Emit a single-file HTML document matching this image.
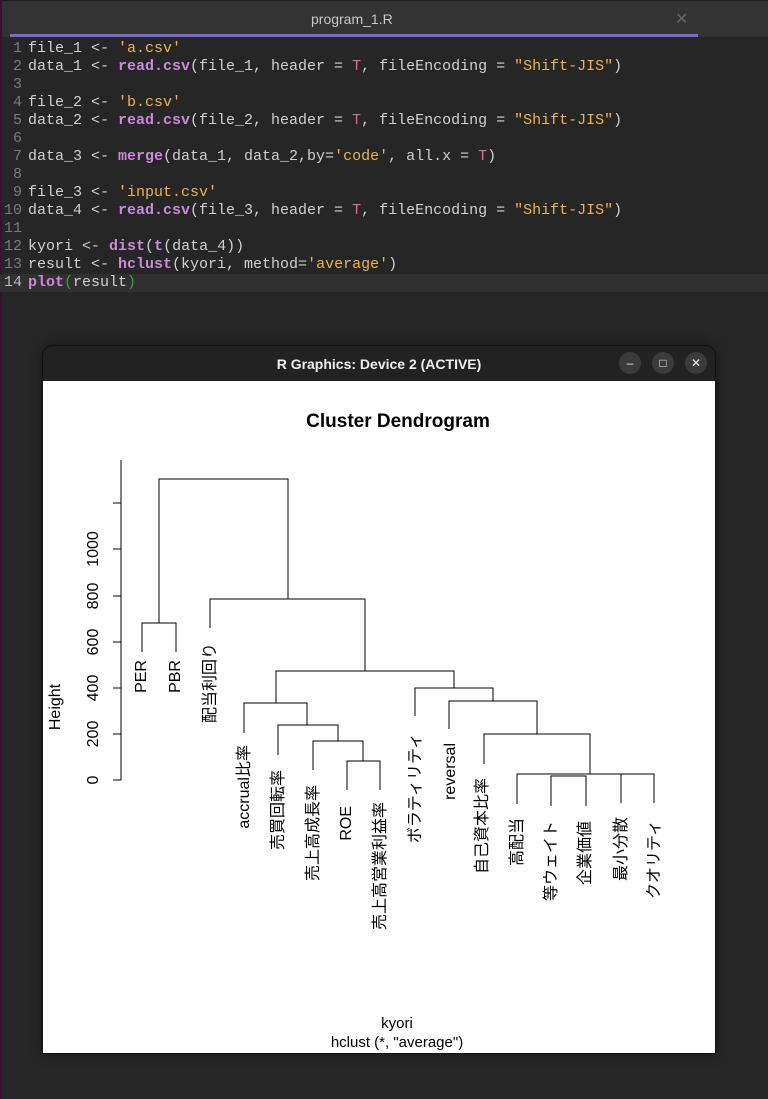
<!DOCTYPE html>
<html><head><meta charset="utf-8"><style>
html,body{margin:0;padding:0}
body{width:768px;height:1099px;background:#262626;position:relative;overflow:hidden;font-family:"Liberation Sans","Noto Sans CJK JP",sans-serif}
.strip{position:absolute;left:0;top:0;width:2px;height:1099px;background:#3a1030}
.tabbar{position:absolute;left:2px;top:0;width:766px;height:37px;background:#333;border-top:1px solid #1e1e1e;box-sizing:border-box}
.tabtitle{position:absolute;left:309px;top:10px;color:#c8c8c8;font-size:14px}
.tabx{position:absolute;left:673px;top:8px;color:#666;font-size:16px}
.uline{position:absolute;left:10px;top:34px;width:688px;height:3px;background:#7a6bd0}
.code{position:absolute;left:0;top:40px;width:768px;font-family:"Liberation Mono",monospace;font-size:15px;color:#d0d0d0}
.ln{height:18px;line-height:18px;white-space:pre;position:relative}
.ln.cur{background:#303030}
.n{display:inline-block;width:22px;text-align:right;color:#7a7a7a;margin-right:6px}
.f{color:#c98ad8;font-weight:bold}
.s{color:#e8b552}
.t{color:#d9708a}
.g{color:#3aa040}
.win{position:absolute;left:43px;top:346px;width:672px;height:707px;background:#222;border-radius:10px 10px 0 0;overflow:hidden;box-shadow:0 0 0 1px #111,0 0 12px rgba(0,0,0,.5)}
.wt{position:absolute;left:0;width:100%;top:10px;text-align:center;color:#eee;font-weight:bold;font-size:14px}
.btn{position:absolute;top:6px;width:22px;height:22px;border-radius:50%;background:#3b3b3b;color:#eee;font-size:12px;text-align:center;line-height:22px}
.plot{position:absolute;left:0;top:35px}
</style></head><body>
<div class="strip"></div>
<div class="tabbar"><div class="tabtitle">program_1.R</div><div class="tabx">✕</div></div>
<div class="uline"></div>
<div class="code">
<div class="ln"><span class="n">1</span>file_1 &lt;- <span class="s">'a.csv'</span></div>
<div class="ln"><span class="n">2</span>data_1 &lt;- <span class="f">read.csv</span>(file_1, header = <span class="t">T</span>, fileEncoding = <span class="s">"Shift-JIS"</span>)</div>
<div class="ln"><span class="n">3</span></div>
<div class="ln"><span class="n">4</span>file_2 &lt;- <span class="s">'b.csv'</span></div>
<div class="ln"><span class="n">5</span>data_2 &lt;- <span class="f">read.csv</span>(file_2, header = <span class="t">T</span>, fileEncoding = <span class="s">"Shift-JIS"</span>)</div>
<div class="ln"><span class="n">6</span></div>
<div class="ln"><span class="n">7</span>data_3 &lt;- <span class="f">merge</span>(data_1, data_2,by=<span class="s">'code'</span>, all.x = <span class="t">T</span>)</div>
<div class="ln"><span class="n">8</span></div>
<div class="ln"><span class="n">9</span>file_3 &lt;- <span class="s">'input.csv'</span></div>
<div class="ln"><span class="n">10</span>data_4 &lt;- <span class="f">read.csv</span>(file_3, header = <span class="t">T</span>, fileEncoding = <span class="s">"Shift-JIS"</span>)</div>
<div class="ln"><span class="n">11</span></div>
<div class="ln"><span class="n">12</span>kyori &lt;- <span class="f">dist</span>(<span class="f">t</span>(data_4))</div>
<div class="ln"><span class="n">13</span>result &lt;- <span class="f">hclust</span>(kyori, method=<span class="s">'average'</span>)</div>
<div class="ln cur"><span class="n" style="color:#bbb">14</span><span class="f">plot</span><span class="g">(</span>result<span class="g">)</span></div>
</div>
<div class="win">
<div class="wt">R Graphics: Device 2 (ACTIVE)</div>
<div class="btn" style="left:576px">–</div>
<div class="btn" style="left:609px">□</div>
<div class="btn" style="left:642px">✕</div>
<svg class="plot" width="672" height="672" viewBox="43 381 672 672" xmlns="http://www.w3.org/2000/svg" style="background:#fff">
<rect x="43" y="381" width="672" height="672" fill="#fff"/>
<g stroke="#000" stroke-width="1" fill="none">
<path d="M121 460V780M113 780H121M113 734H121M113 688H121M113 642H121M113 596H121M113 549H121M113 503H121"/>
<path d="M142 652V623H176V652M159 623V479H288V599"/>
<path d="M210 628V599H365V671"/>
<path d="M276 703V671H454V688"/>
<path d="M244 733V703H307V725"/>
<path d="M278 755V725H338V741"/>
<path d="M313 770V741H363V761"/>
<path d="M347 790V761H380V790"/>
<path d="M415 716V688H493V701"/>
<path d="M449 729V701H537V734"/>
<path d="M484 764V734H590V774"/>
<path d="M517 804V774H654V803M551 806V776H586V806M621 803V774"/>
</g>
<g font-family="Liberation Sans,Noto Sans CJK JP,sans-serif" font-size="16" fill="#000">
<text x="398" y="427" text-anchor="middle" font-weight="bold" font-size="19">Cluster Dendrogram</text>
<text x="397" y="1028" text-anchor="middle" font-size="15">kyori</text>
<text x="397" y="1047" text-anchor="middle" font-size="15">hclust (*, "average")</text>
<text transform="translate(60,707) rotate(-90)" text-anchor="middle">Height</text>
<g text-anchor="middle">
<text transform="translate(98,780) rotate(-90)">0</text>
<text transform="translate(98,734) rotate(-90)">200</text>
<text transform="translate(98,688) rotate(-90)">400</text>
<text transform="translate(98,642) rotate(-90)">600</text>
<text transform="translate(98,596) rotate(-90)">800</text>
<text transform="translate(98,549) rotate(-90)">1000</text>
</g>
<g text-anchor="end">
<text transform="translate(146,660) rotate(-90)">PER</text>
<text transform="translate(180,660) rotate(-90)">PBR</text>
<text transform="translate(215,643) rotate(-90)">配当利回り</text>
<text transform="translate(249,745) rotate(-90)">accrual比率</text>
<text transform="translate(283,770) rotate(-90)">売買回転率</text>
<text transform="translate(318,785) rotate(-90)">売上高成長率</text>
<text transform="translate(351,806) rotate(-90)">ROE</text>
<text transform="translate(385,802) rotate(-90)">売上高営業利益率</text>
<text transform="translate(420,733) rotate(-90)">ボラティリティ</text>
<text transform="translate(455,743) rotate(-90)">reversal</text>
<text transform="translate(487,778) rotate(-90)">自己資本比率</text>
<text transform="translate(522,818) rotate(-90)">高配当</text>
<text transform="translate(556,821) rotate(-90)">等ウェイト</text>
<text transform="translate(590,821) rotate(-90)">企業価値</text>
<text transform="translate(626,817) rotate(-90)">最小分散</text>
<text transform="translate(659,820) rotate(-90)">クオリティ</text>
</g>
</g>
</svg>
</div>
</body></html>
